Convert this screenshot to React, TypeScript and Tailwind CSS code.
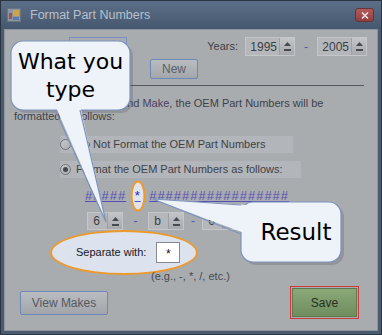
import React from "react"

function Spin({ value, className, align }: { value: string; className: string; align: string }) {
  return (
    <div className={`flex border border-[#c4c6c9] bg-[#b5b7ba] ${className}`}>
      <div className={`flex-1 flex items-center pr-[2px] text-[12px] text-[#3b3f45] ${align}`}>{value}</div>
      <div className="w-[15px] flex flex-col items-center justify-center gap-[3px] bg-gradient-to-b from-[#c3c5c8] to-[#a6a9ad] border-l border-[#9da1a6]">
        <svg width="7" height="4" viewBox="0 0 7 4">
          <path d="M0 4 L3.5 0 L7 4Z" fill="#474b51" />
        </svg>
        <div className="w-[7px] h-[2px] bg-[#474b51]" />
      </div>
    </div>
  )
}

function Radio({ checked }: { checked?: boolean }) {
  return (
    <div className="w-[11px] h-[11px] rounded-full border border-[#6f747a] bg-gradient-to-br from-[#c9cbce] to-[#a9acb0] flex items-center justify-center">
      {checked && <div className="w-[5px] h-[5px] rounded-full bg-[#45494f]" />}
    </div>
  )
}

export default function App() {
  return (
    <div className="relative w-[382px] h-[335px] overflow-hidden bg-[#4a5b70] border border-[#2a3542] font-['Liberation_Sans',Arial,sans-serif]">
      {/* title bar */}
      <div className="h-[28px] flex items-center pl-[6px] pr-[7px] bg-gradient-to-b from-[#5c6f87] to-[#45586f]">
        <svg width="14" height="14" viewBox="0 0 14 14">
          <rect x="0.5" y="0.5" width="13" height="13" fill="#8c96a2" stroke="#6a7482" />
          <rect x="2" y="5" width="3" height="6" fill="#b34a4a" />
          <rect x="6" y="2" width="6" height="6" fill="#c9a64a" />
          <rect x="6" y="9" width="6" height="3" fill="#5a7bb0" />
        </svg>
        <span className="ml-[9px] text-[12.5px] text-[#b7c0cb]">Format Part Numbers</span>
        <div className="ml-auto w-[19px] h-[14px] rounded-[3px] bg-gradient-to-b from-[#b25a5a] to-[#923f3f] border border-[#6a3434] flex items-center justify-center">
          <svg width="8" height="7" viewBox="0 0 8 7">
            <path d="M1 0.5 L7 6.5 M7 0.5 L1 6.5" stroke="#e8dcdc" strokeWidth="1.6" />
          </svg>
        </div>
      </div>

      {/* body */}
      <div className="mx-[3px] h-[302px] bg-[#a9acaf] border border-[#8d949c] text-[11px] text-[#3e4248] flex flex-col">
        <div className="mt-[7px] h-[19px] flex items-center pr-[10px]">
          <div className="ml-[64px] w-[58px] h-[19px] border border-[#7d8fc0]" />
          <span className="ml-auto">Years:</span>
          <Spin value="1995" className="ml-[7px] w-[50px] h-[19px]" align="justify-end" />
          <span className="w-[22px] text-center text-[#4c58b0] text-[12px]">-</span>
          <Spin value="2005" className="w-[50px] h-[19px]" align="justify-end" />
        </div>

        <div className="mt-[3px] ml-[145px] w-[48px] h-[20px] rounded-[2px] border border-[#6f88b8] bg-gradient-to-b from-[#b9bcc0] to-[#a3a6aa] flex items-center justify-center text-[#5b5f65] text-[12px]">
          New
        </div>

        <div className="mt-[6px] ml-[125px] mr-[13px] h-px bg-[#55595f]" />

        <div className="mt-[11px] ml-[9px] leading-[13px] whitespace-nowrap">
          For the selected Year and <span className="text-[#4a3f5e]">Make</span>, the OEM Part Numbers will be
          <br />
          formatted as follows:
        </div>

        <div className="mt-[13px] ml-[55px] w-[233px] h-[17px] bg-[#b2b5b9] flex items-center">
          <Radio />
          <span className="ml-[5px]">Do Not Format the OEM Part Numbers</span>
        </div>

        <div className="mt-[8px] ml-[55px] w-[241px] h-[17px] bg-[#b2b5b9] flex items-center">
          <Radio checked />
          <span className="ml-[5px]">Format the OEM Part Numbers as follows:</span>
        </div>

        <div className="mt-[9px] ml-[80px] h-[18px] isolate flex items-center text-[13px] tracking-[1px] text-[#5650b4] underline decoration-[#5650b4] whitespace-nowrap">
          <span>#####</span>
          <span className="relative inline-block w-[23px] text-center text-[#1d22d6] no-underline">
            <span className="absolute left-1/2 top-1/2 -translate-x-1/2 -translate-y-1/2 -z-10 w-[15px] h-[31px] rounded-[50%] border-2 border-[#ec9a2c] bg-[#dfe4ee]" />
            *
          </span>
          <span>#################</span>
        </div>

        <div className="mt-[7px] ml-[82px] h-[18px] flex items-center">
          <Spin value="6" className="w-[36px] h-[18px]" align="justify-center" />
          <span className="w-[25px] text-center text-[#4c58b0] text-[12px]">-</span>
          <Spin value="b" className="w-[36px] h-[18px]" align="justify-center" />
          <span className="w-[18px] text-center text-[#4c58b0] text-[12px]">-</span>
          <Spin value="6" className="w-[36px] h-[18px]" align="justify-center" />
        </div>

        <div className="ml-[45px] w-[148px] h-[45px] rounded-[50%] border-2 border-[#ec9a2c] bg-[#dce2ee] flex items-center pl-[24px]">
          <span className="text-[#15181c]">Separate with:</span>
          <div className="ml-[10px] w-[24px] h-[21px] bg-white border border-[#858a91] flex justify-center pt-[2px] text-[12px] text-[#111]">
            *
          </div>
        </div>

        <div className="-mt-[6px] ml-[146px] leading-[14px] text-[#464a50]">(e.g., -, *, /, etc.)</div>

        <div className="mt-[3px] h-[33px] flex items-center">
          <div className="ml-[15px] w-[88px] h-[24px] rounded-[2px] border border-[#6f88b8] bg-gradient-to-b from-[#b9bcc0] to-[#a2a5a9] flex items-center justify-center text-[12px] text-[#55595f]">
            View Makes
          </div>
          <div className="ml-auto mr-[18px] w-[69px] h-[33px] border border-[#c73b3b] p-px">
            <div className="w-full h-full border border-[#5d774f] bg-gradient-to-b from-[#8aa878] to-[#6f8d5e] flex items-center justify-center text-[12px] text-[#26301f]">
              Save
            </div>
          </div>
        </div>
      </div>

      {/* callouts */}
      <svg className="absolute left-0 top-0 pointer-events-none" width="380" height="333" viewBox="0 0 380 333">
        <rect x="13" y="43" width="119" height="69" rx="12" fill="rgba(40,45,55,0.18)" />
        <rect x="10" y="40" width="119" height="69" rx="12" fill="#eef2f9" stroke="#7d93bd" strokeWidth="1.2" />
        <polygon points="54,104 79,104 105,221" fill="#eef2f9" />
        <path d="M54 109 L105 221 L79 109" fill="none" stroke="#7d93bd" strokeWidth="1.2" />

        <rect x="243" y="204" width="100" height="60" rx="12" fill="rgba(40,45,55,0.18)" />
        <rect x="240" y="201" width="100" height="60" rx="12" fill="#eef2f9" stroke="#7d93bd" strokeWidth="1.2" />
        <polygon points="152,198 246,204 246,233" fill="#eef2f9" />
        <path d="M240 204 L152 198 L240 233" fill="none" stroke="#7d93bd" strokeWidth="1.2" />
      </svg>

      <div className="absolute left-[10px] top-[40px] w-[119px] h-[69px] flex flex-col items-center justify-center font-['DejaVu_Sans',Verdana,sans-serif] text-[22px] leading-[28px] text-black">
        <span>What you</span>
        <span>type</span>
      </div>
      <div className="absolute left-[240px] top-[201px] w-[100px] h-[60px] flex items-center justify-center pl-[10px] font-['DejaVu_Sans',Verdana,sans-serif] text-[23px] text-black">
        Result
      </div>
    </div>
  )
}
